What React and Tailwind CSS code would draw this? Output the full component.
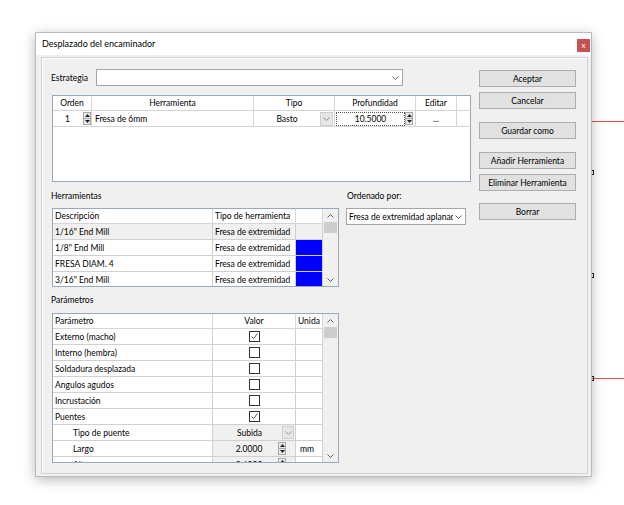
import React from "react";

const Chev = ({ up = false, color = "#6a6a6a" }) => (
  <svg width="7" height="4" viewBox="0 0 7 4">
    <polyline
      points={up ? "0.5,3.5 3.5,0.5 6.5,3.5" : "0.5,0.5 3.5,3.5 6.5,0.5"}
      fill="none"
      stroke={color}
      strokeWidth="1"
    />
  </svg>
);

const Spin = () => (
  <div className="flex flex-col w-[8px] h-[13px] border border-[#a8a8a8] bg-[#e8e8e8]">
    <div className="h-[6px] flex items-center justify-center border-b border-[#a8a8a8]">
      <svg width="5" height="3" viewBox="0 0 5 3">
        <path d="M2.5 0L5 3H0Z" fill="#222" />
      </svg>
    </div>
    <div className="flex-1 flex items-center justify-center">
      <svg width="5" height="3" viewBox="0 0 5 3">
        <path d="M0 0H5L2.5 3Z" fill="#222" />
      </svg>
    </div>
  </div>
);

const Check = ({ checked }) => (
  <div className="w-[11px] h-[11px] border border-[#333] bg-white flex items-center justify-center">
    {checked && (
      <svg width="9" height="9" viewBox="0 0 9 9">
        <polyline points="1.5,4.5 3.5,6.5 7.5,1.5" fill="none" stroke="#555" strokeWidth="1" />
      </svg>
    )}
  </div>
);

const Btn = ({ children, className }) => (
  <div className={"h-[17px] w-[97px] border border-[#adadad] bg-[#e1e1e1] flex items-center justify-center " + className}>
    {children}
  </div>
);

const VScroll = () => (
  <div className="w-[15px] h-full bg-[#f0f0f0] flex flex-col items-center">
    <div className="h-[13px] flex items-center justify-center">
      <Chev up color="#606060" />
    </div>
    <div className="w-[13px] h-[11px] bg-[#cdcdcd]" />
    <div className="flex-1" />
    <div className="h-[13px] flex items-center justify-center">
      <Chev color="#606060" />
    </div>
  </div>
);

const tools = [
  { d: '1/16" End Mill', sel: true },
  { d: '1/8" End Mill' },
  { d: "FRESA DIAM. 4" },
  { d: '3/16" End Mill' },
];

const params = [
  { l: "Externo (macho)", c: true },
  { l: "Interno (hembra)", c: false },
  { l: "Soldadura desplazada", c: false },
  { l: "Angulos agudos", c: false },
  { l: "Incrustación", c: false },
  { l: "Puentes", c: true },
  { l: "Tipo de puente", sub: true, combo: "Subida" },
  { l: "Largo", sub: true, spin: "2.0000", unit: "mm" },
  { l: "Alto", sub: true, spin: "0.6000", unit: "mm" },
];

export default function App() {
  return (
    <div className="w-[624px] h-[505px] bg-white relative overflow-hidden font-['Lato',sans-serif] text-[8.5px] leading-[12px] text-black">
      {/* background canvas marks */}
      <div className="absolute top-[121px] left-[591px] w-[33px] h-px bg-[#e84a4a]" />
      <div className="absolute top-[378px] left-[591px] w-[33px] h-px bg-[#e84a4a]" />
      <div className="absolute top-[170px] left-[591px] w-[3px] h-[5px] border-y border-r border-[#222]" />
      <div className="absolute top-[273px] left-[591px] w-[3px] h-[5px] border-y border-r border-[#222]" />
      <div className="absolute top-[376px] left-[591px] w-[3px] h-[5px] border-y border-r border-[#222]" />

      <div className="relative pt-[32px] pl-[35px]">
        <div className="w-[557px] h-[445px] border border-[#b9b9b9] bg-white flex flex-col shadow-[0_3px_12px_rgba(0,0,0,0.28)]">
          {/* title bar */}
          <div className="h-[22px] flex items-start shrink-0">
            <div className="flex-1 h-[22px] flex items-center pl-[6px] text-[9px]">Desplazado del encaminador</div>
            <div className="mt-[6px] mr-[1px] w-[13px] h-[13px] bg-[#c75050] flex items-center justify-center text-white text-[8px] leading-none pb-[1px]">x</div>
          </div>
          {/* body */}
          <div className="flex-1 bg-[#f0f0f0] pl-[5px] pt-[2px]">
            <div className="w-[547px] h-[417px] border border-[#d2d2d2] shadow-[inset_1px_1px_0_#ffffff] flex pl-[9px] pt-[11px]">
              {/* left column */}
              <div className="w-[420px] flex flex-col">
                <div className="flex items-center h-[17px]">
                  <div className="w-[45px]">Estrategia</div>
                  <div className="w-[307px] h-[17px] border border-[#a5a5a5] bg-white flex items-center justify-end pr-[3px]">
                    <Chev />
                  </div>
                </div>
                {/* table 1 */}
                <div className="mt-[9px] ml-[1px] w-[419px] h-[87px] border border-[#99a9bb] bg-white overflow-hidden">
                  <div className="flex h-[15px] border-b border-[#d5d5d5]">
                    <div className="w-[39px] border-r border-[#d8d8d8] flex items-center justify-center">Orden</div>
                    <div className="w-[162px] border-r border-[#d8d8d8] flex items-center justify-center">Herramienta</div>
                    <div className="w-[81px] border-r border-[#d8d8d8] flex items-center justify-center">Tipo</div>
                    <div className="w-[81px] border-r border-[#d8d8d8] flex items-center justify-center">Profundidad</div>
                    <div className="w-[41px] border-r border-[#d8d8d8] flex items-center justify-center">Editar</div>
                  </div>
                  <div className="flex h-[16px] border-b border-[#d5d5d5]">
                    <div className="w-[39px] border-r border-[#d5d5d5] flex items-center">
                      <div className="flex-1 text-center pr-[1px]">1</div>
                      <Spin />
                    </div>
                    <div className="w-[162px] border-r border-[#d5d5d5] flex items-center pl-[3px]">Fresa de 6mm</div>
                    <div className="w-[81px] border-r border-[#d5d5d5] flex items-center">
                      <div className="flex-1 text-center">Basto</div>
                      <div className="w-[13px] h-[14px] bg-[#e6e6e6] border border-[#cfcfcf] mr-[1px] flex items-center justify-center">
                        <Chev color="#888" />
                      </div>
                    </div>
                    <div className="w-[81px] border-r border-[#d5d5d5] flex items-center">
                      <div className="flex-1 h-[14px] border border-dotted border-[#555] flex items-center justify-center ml-[1px]">10.5000</div>
                      <Spin />
                      <div className="w-[2px]" />
                    </div>
                    <div className="w-[41px] border-r border-[#d5d5d5] flex items-center justify-center">...</div>
                  </div>
                </div>
                {/* lower section */}
                <div className="flex">
                  <div className="w-[288px] flex flex-col">
                    <div className="mt-[8px] h-[12px]">Herramientas</div>
                    <div className="mt-[6px] ml-[1px] w-[287px] h-[79px] border border-[#99a9bb] bg-white flex overflow-hidden">
                      <div className="w-[270px] flex flex-col">
                        <div className="flex h-[15px] shrink-0 border-b border-[#d5d5d5]">
                          <div className="w-[160px] border-r border-[#d8d8d8] flex items-center pl-[2px]">Descripción</div>
                          <div className="w-[83px] border-r border-[#d8d8d8] flex items-center pl-[2px]">Tipo de herramienta</div>
                          <div className="w-[27px] border-r border-[#d8d8d8]" />
                        </div>
                        {tools.map((t, i) => (
                          <div key={i} className={"flex h-[16px] shrink-0 border-b border-[#d0d0d0] " + (t.sel ? "bg-[#f0f0f0]" : "bg-white")}>
                            <div className="w-[160px] border-r border-[#d0d0d0] flex items-center pl-[2px]">{t.d}</div>
                            <div className="w-[83px] border-r border-[#d0d0d0] flex items-center pl-[2px] whitespace-nowrap overflow-hidden">Fresa de extremidad</div>
                            <div className={"w-[27px] border-r border-[#d0d0d0] " + (t.sel ? "bg-[#f0f0f0]" : "bg-[#0000ff]")} />
                          </div>
                        ))}
                      </div>
                      <VScroll />
                    </div>
                    <div className="mt-[7px] h-[12px]">Parámetros</div>
                    <div className="mt-[7px] ml-[1px] w-[287px] h-[150px] border border-[#99a9bb] bg-white flex overflow-hidden">
                      <div className="w-[270px] flex flex-col">
                        <div className="flex h-[15px] shrink-0 border-b border-[#d5d5d5]">
                          <div className="w-[160px] border-r border-[#d8d8d8] flex items-center pl-[2px]">Parámetro</div>
                          <div className="w-[83px] border-r border-[#d8d8d8] flex items-center justify-center">Valor</div>
                          <div className="w-[27px] border-r border-[#d8d8d8] flex items-center pl-[2px] overflow-hidden whitespace-nowrap">Unida</div>
                        </div>
                        {params.map((p, i) => (
                          <div key={i} className="flex h-[16px] shrink-0 border-b border-[#d0d0d0]">
                            <div className={"w-[160px] border-r border-[#d0d0d0] flex items-center " + (p.sub ? "pl-[20px]" : "pl-[2px]")}>{p.l}</div>
                            {p.combo ? (
                              <div className="w-[83px] border-r border-[#d0d0d0] bg-[#f0f0f0] flex items-center">
                                <div className="flex-1 text-center pl-[4px]">{p.combo}</div>
                                <div className="w-[12px] h-[13px] bg-[#e6e6e6] border border-[#cfcfcf] mr-[1px] flex items-center justify-center">
                                  <Chev color="#999" />
                                </div>
                              </div>
                            ) : p.spin ? (
                              <div className="w-[83px] border-r border-[#d0d0d0] bg-[#f0f0f0] flex items-center">
                                <div className="flex-1 text-center pl-[7px]">{p.spin}</div>
                                <Spin />
                                <div className="w-[9px]" />
                              </div>
                            ) : (
                              <div className="w-[83px] border-r border-[#d0d0d0] flex items-center justify-center">
                                <Check checked={p.c} />
                              </div>
                            )}
                            <div className="w-[27px] border-r border-[#d0d0d0] flex items-center pl-[4px]">{p.unit || ""}</div>
                          </div>
                        ))}
                      </div>
                      <VScroll />
                    </div>
                  </div>
                  <div className="ml-[7px] flex flex-col">
                    <div className="mt-[8px] h-[12px] pl-[1px]">Ordenado por:</div>
                    <div className="mt-[6px] w-[120px] h-[17px] border border-[#a5a5a5] bg-white flex items-center pl-[2px] pr-[3px]">
                      <div className="flex-1 overflow-hidden whitespace-nowrap">Fresa de extremidad aplanada</div>
                      <div className="ml-[2px]">
                        <Chev />
                      </div>
                    </div>
                  </div>
                </div>
              </div>
              {/* buttons */}
              <div className="ml-[8px] pt-[1px] flex flex-col">
                <Btn className="">Aceptar</Btn>
                <Btn className="mt-[5px]">Cancelar</Btn>
                <Btn className="mt-[13px]">Guardar como</Btn>
                <Btn className="mt-[13px]">Añadir Herramienta</Btn>
                <Btn className="mt-[5px]">Eliminar Herramienta</Btn>
                <Btn className="mt-[12px]">Borrar</Btn>
              </div>
            </div>
          </div>
        </div>
      </div>
    </div>
  );
}
